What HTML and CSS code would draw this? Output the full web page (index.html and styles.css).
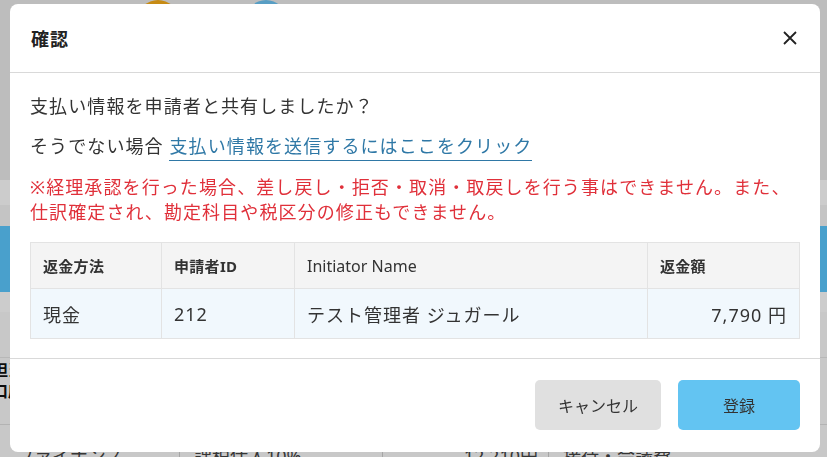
FILE: index.html
```html
<!DOCTYPE html>
<html lang="ja">
<head>
<meta charset="UTF-8">
<meta name="viewport" content="width=device-width, initial-scale=1.0">
<title>確認</title>
<link rel="stylesheet" href="styles.css">
</head>
<body>

<div class="page">
  <div class="topbar">
    <span class="avatar orange"></span>
    <span class="avatar blue"></span>
  </div>
  <div class="subbar"></div>
  <div class="tabs"></div>
  <div class="band"></div>
  <div class="row light"></div>
  <div class="row"></div>
  <div class="thead"><span>担当<br>口座</span></div>
  <div class="trow">
    <span>ファイナンス</span>
    <span>課税仕入10%</span>
    <span class="num">12,210円</span>
    <span>接待・会議費</span>
  </div>
</div>

<div class="overlay">
  <div class="modal">
    <div class="modal-header">
      <span class="modal-title">確認</span>
      <svg class="close" width="14" height="14" viewBox="0 0 14 14">
        <path d="M1 1L13 13M13 1L1 13" stroke="#222" stroke-width="1.8" fill="none"/>
      </svg>
    </div>

    <div class="modal-body">
      <p class="question">支払い情報を申請者と共有しましたか？</p>
      <p class="fallback">そうでない場合 <a href="#" class="link">支払い情報を送信するにはここをクリック</a></p>
      <p class="warning">※経理承認を行った場合、差し戻し・拒否・取消・取戻しを行う事はできません。また、<br>仕訳確定され、勘定科目や税区分の修正もできません。</p>

      <table class="summary">
        <colgroup>
          <col class="c-method">
          <col class="c-id">
          <col class="c-name">
          <col>
        </colgroup>
        <thead>
          <tr>
            <th>返金方法</th>
            <th>申請者ID</th>
            <th class="plain">Initiator Name</th>
            <th>返金額</th>
          </tr>
        </thead>
        <tbody>
          <tr>
            <td>現金</td>
            <td>212</td>
            <td>テスト管理者 ジュガール</td>
            <td class="amount">7,790 円</td>
          </tr>
        </tbody>
      </table>
    </div>

    <div class="modal-footer">
      <button class="btn cancel">キャンセル</button>
      <button class="btn submit">登録</button>
    </div>
  </div>
</div>

</body>
</html>
```

FILE: styles.css
```css
body {
    margin: 0;
    padding: 0;
    font-family: "Noto Sans", "Noto Sans CJK JP", sans-serif;
    color: #333;
    overflow: hidden;
}

/* page behind the dialog */
.page {
    background: #ededed;
}
.topbar {
    height: 180px;
    display: flex;
    gap: 68px;
    padding-left: 138px;
}
.avatar {
    width: 40px;
    height: 40px;
    border-radius: 50%;
}
.avatar.orange {
    background: #f9ae19;
}
.avatar.blue {
    background: #6fc6f5;
}
.subbar {
    height: 25px;
    background: #ffffff;
}
.tabs {
    height: 21px;
    background: #f6f6f6;
}
.band {
    height: 66px;
    background: #5cc8ff;
}
.row {
    height: 45px;
    background: #fafafa;
    border-bottom: 1px solid #e6e6e6;
}
.row.light {
    height: 20px;
    background: #ffffff;
    border-bottom: 0;
}
.thead {
    height: 64px;
    padding-top: 2px;
    background: #fafafa;
    border-bottom: 1px solid #e0e0e0;
    font-size: 16px;
    font-weight: 700;
    line-height: 21px;
    color: #111;
}
.thead span {
    display: block;
    margin-left: -8px;
}
.trow {
    height: 60px;
    background: #fafafa;
    display: grid;
    grid-template-columns: 179px 203px 166px 1fr;
    font-size: 18px;
    line-height: 26px;
    color: #444;
}
.trow span {
    padding: 18px 0 0 14px;
    border-left: 1px solid #d0d0d0;
}
.trow span:first-child {
    border-left: 0;
    padding-left: 16px;
}
.trow .num {
    text-align: right;
    padding-right: 10px;
}

/* dialog */
.overlay {
    position: fixed;
    top: 0;
    left: 0;
    right: 0;
    bottom: 0;
    background: rgba(0, 0, 0, 0.2);
}
.modal {
    width: 810px;
    height: 448px;
    margin: 4px 0 0 10px;
    background: #fff;
    border-radius: 8px;
    display: flex;
    flex-direction: column;
}
.modal-header {
    height: 68px;
    border-bottom: 1px solid #d9d9d9;
    display: flex;
    align-items: center;
    justify-content: space-between;
    padding: 0 23px 0 21px;
}
.modal-title {
    font-size: 18px;
    font-weight: 700;
    letter-spacing: 1px;
    color: #222;
}
.modal-body {
    flex: 1;
    padding: 20px 20px 0;
}
.modal-body p {
    margin: 0;
    font-size: 18px;
    line-height: 26px;
    letter-spacing: 1.1px;
}
.modal-body .fallback {
    margin-top: 14px;
}
.link {
    color: #2f78a6;
    text-decoration: none;
    border-bottom: 1px solid #2f78a6;
    padding-bottom: 2px;
}
.modal-body .warning {
    margin-top: 16px;
    line-height: 25px;
    color: #e0303a;
}

.summary {
    width: 100%;
    margin-top: 17px;
    border-collapse: collapse;
    table-layout: fixed;
}
.c-method {
    width: 131px;
}
.c-id {
    width: 133px;
}
.c-name {
    width: 353px;
}
.summary th,
.summary td {
    border: 1px solid #e3e3e3;
    padding: 0 12px;
    text-align: left;
}
.summary th {
    height: 45px;
    background: #f4f4f4;
    font-size: 15px;
    font-weight: 700;
    letter-spacing: 0.3px;
    color: #333;
}
.summary th.plain {
    font-weight: 400;
    font-size: 16px;
    letter-spacing: 0;
}
.summary td {
    height: 49px;
    background: #f1f8fd;
    font-size: 18px;
    letter-spacing: 1px;
}
.summary td.amount {
    text-align: right;
}

.modal-footer {
    border-top: 1px solid #d9d9d9;
    padding: 21px 20px 22px;
    display: flex;
    justify-content: flex-end;
    gap: 17px;
}
.btn {
    height: 50px;
    border: 0;
    border-radius: 5px;
    font-family: inherit;
    font-size: 16px;
    color: #333;
    padding: 0;
}
.btn.cancel {
    width: 126px;
    background: #e0e0e0;
}
.btn.submit {
    width: 122px;
    background: #63c4f2;
}
```
